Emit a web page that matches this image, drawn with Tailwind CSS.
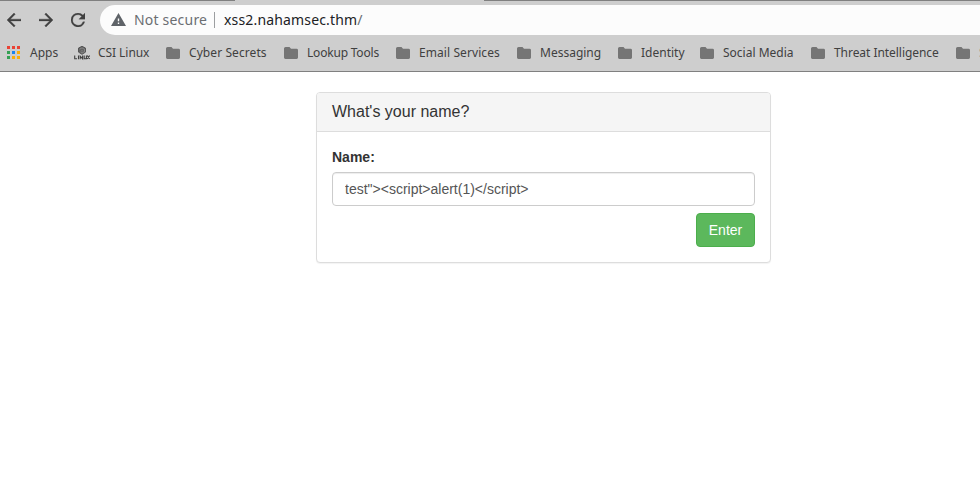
<!DOCTYPE html>
<html lang="en">
<head>
<meta charset="utf-8">
<title>xss2.nahamsec.thm</title>
<script src="https://cdn.jsdelivr.net/npm/@tailwindcss/browser@4"></script>
</head>
<body class="h-[483px] w-[980px] overflow-hidden bg-white font-['Liberation_Sans',Arial,sans-serif]">
<svg class="hidden">
  <symbol id="folder" viewBox="0 0 14 12"><path d="M1.5 0H5.5L7 1.8H12.6Q14 1.8 14 3.2V10.6Q14 12 12.6 12H1.4Q0 12 0 10.6V1.5Q0 0 1.5 0Z" fill="#757575"/></symbol>
</svg>
<header class="flex h-[72px] flex-col border-b border-[#808080] bg-[#cecece] font-['Noto_Sans',sans-serif]">
  <div class="flex h-px shrink-0 justify-between">
    <div class="w-[235px] bg-[#808080]"></div>
    <div class="w-[496px] bg-[#808080]"></div>
  </div>
  <div class="flex h-[38px] shrink-0 items-start pt-1">
    <nav class="flex h-[30px] w-[100px] shrink-0 items-center gap-[18px] pl-[7px]">
      <svg class="size-3.5" viewBox="4 4 16 16" fill="#404040"><path d="M20 11H7.83l5.59-5.59L12 4l-8 8 8 8 1.41-1.41L7.83 13H20z" stroke="#404040" stroke-width=".4"/></svg>
      <svg class="size-3.5" viewBox="4 4 16 16" fill="#404040"><path d="M12 4l-1.41 1.41L16.17 11H4v2h12.17l-5.58 5.59L12 20l8-8z" stroke="#404040" stroke-width=".4"/></svg>
      <svg class="size-3.5" viewBox="4 4 16 16" fill="#404040"><path d="M17.65 6.35A7.95 7.95 0 0 0 12 4a8 8 0 1 0 7.73 10h-2.08A6 6 0 1 1 12 6c1.66 0 3.14.69 4.22 1.78L13 11h7V4z" stroke="#404040" stroke-width=".3"/></svg>
    </nav>
    <div class="flex h-[30px] flex-1 items-center rounded-l-full bg-[#fcfcfc] pl-[11px] text-[14px]">
      <svg class="mb-0.5 h-[13px] w-[15px] shrink-0" viewBox="1 2 22 19" preserveAspectRatio="none" fill="#5f6368"><path d="M1 21h22L12 2 1 21zm12-3h-2v-2h2v2zm0-4h-2v-4h2v4z"/></svg>
      <span class="mb-0.5 ml-2 w-20 whitespace-nowrap tracking-[0.2px] text-[#6b6e72]">Not secure</span>
      <span class="h-4 w-px bg-[#9c9ea0]"></span>
      <span class="mb-0.5 ml-[9px] tracking-[0.16px] text-[#202124]">xss2.nahamsec.thm<span class="text-[#6b6e72]">/</span></span>
    </div>
  </div>
  <div class="flex h-7 shrink-0 items-center overflow-hidden whitespace-nowrap pl-[7px] text-[12px] text-[#404040]">
    <div class="flex w-[67px] shrink-0 items-center gap-[10px]">
      <svg class="mb-px h-[13px] w-[13px]" viewBox="0 0 13 13" shape-rendering="crispEdges"><path fill="#ea4335" d="M0 0h3v3H0zM5 0h3v3H5zM10 0h3v3h-3z"/><path fill="#34a053" d="M0 5h3v3H0zM0 10h3v3H0z"/><path fill="#1a84f0" d="M5 5h3v3H5z"/><path fill="#fbad08" d="M10 5h3v3h-3zM5 10h3v3H5zM10 10h3v3h-3z"/></svg>
      <span>Apps</span>
    </div>
    <div class="flex w-[92px] shrink-0 items-center gap-2">
      <svg class="h-4 w-4" viewBox="0 0 16 16" fill="none" stroke="#404040"><path d="M8 1.300l3.500 1.800v4L8 9.300 4.500 7.100v-4z" fill="#626262" stroke="#555" stroke-width="1"/><path d="M5.500 4.200L8 2.900l2.500 1.300v2.400L8 8 6.500 7M8 5v1.500" stroke="#aaa" stroke-width=".5"/><path d="M.7 10.500v3.200H3M4.500 10.500v3.700M6.200 14.200v-3l2.400 2.700v-3.400M10.200 10.500v3.200h2.200v-3.200M13.200 10.500l2.400 3.500M15.600 10.500l-2.400 3.500" stroke-width="1.100"/></svg>
      <span class="tracking-[-0.06px]">CSI Linux</span>
    </div>
    <div class="flex w-[118px] shrink-0 items-center gap-[9px]"><svg class="h-3 w-3.5"><use href="#folder"/></svg><span class="tracking-[0.08px]">Cyber Secrets</span></div>
    <div class="flex w-[112px] shrink-0 items-center gap-[9px]"><svg class="h-3 w-3.5"><use href="#folder"/></svg><span class="tracking-[-0.2px]">Lookup Tools</span></div>
    <div class="flex w-[121px] shrink-0 items-center gap-[9px]"><svg class="h-3 w-3.5"><use href="#folder"/></svg><span class="tracking-[0.08px]">Email Services</span></div>
    <div class="flex w-[101px] shrink-0 items-center gap-[9px]"><svg class="h-3 w-3.5"><use href="#folder"/></svg><span>Messaging</span></div>
    <div class="flex w-[82px] shrink-0 items-center gap-[9px]"><svg class="h-3 w-3.5"><use href="#folder"/></svg><span>Identity</span></div>
    <div class="flex w-[111px] shrink-0 items-center gap-[9px]"><svg class="h-3 w-3.5"><use href="#folder"/></svg><span>Social Media</span></div>
    <div class="flex w-[145px] shrink-0 items-center gap-[9px]"><svg class="h-3 w-3.5"><use href="#folder"/></svg><span class="tracking-[-0.05px]">Threat Intelligence</span></div>
    <div class="flex shrink-0 items-center gap-[9px]"><svg class="h-3 w-3.5"><use href="#folder"/></svg><span class="text-[#808080]">S</span></div>
  </div>
</header>
<main class="pt-5 pl-[316px]">
  <section class="w-[455px] rounded-[4px] border border-[#ddd] bg-white shadow-[0_1px_1px_rgba(0,0,0,0.05)]">
    <h3 class="h-[39px] rounded-t-[3px] border-b border-[#ddd] bg-[#f5f5f5] px-[15px] pt-[10px] text-[16px] leading-[17px] text-[#333]">What's your name?</h3>
    <form class="flex flex-col p-[15px]">
      <label for="name" class="mb-[5px] text-[14px] leading-[20px] font-bold text-[#333]">Name:</label>
      <input id="name" type="text" value='test"&gt;&lt;script&gt;alert(1)&lt;/script&gt;' class="h-[34px] rounded-[4px] border border-[#ccc] px-3 py-1.5 text-[14px] leading-[20px] text-[#555] shadow-[inset_0_1px_1px_rgba(0,0,0,0.075)]">
      <button type="button" class="mt-[7px] h-[34px] w-[59px] self-end rounded-[4px] border border-[#4cae4c] bg-[#5cb85c] text-[14px] leading-[20px] text-white">Enter</button>
    </form>
  </section>
</main>
</body>
</html>
